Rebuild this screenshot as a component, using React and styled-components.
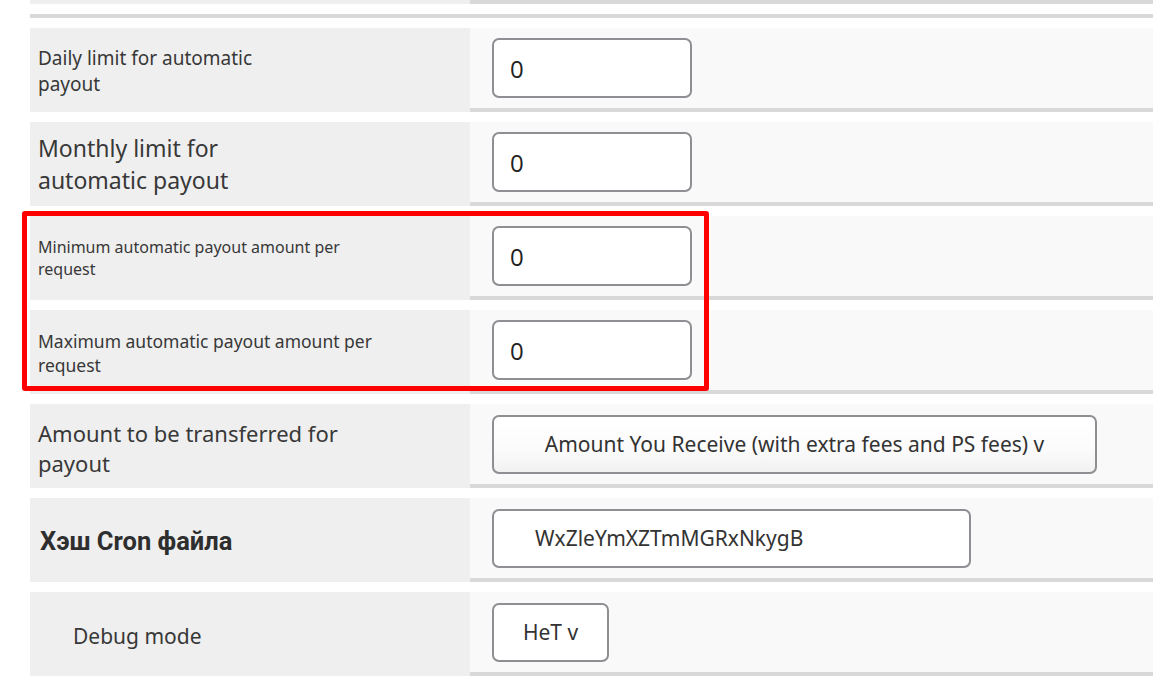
import React from "react";
import styled, { createGlobalStyle } from "styled-components";

const GlobalStyle = createGlobalStyle`
  html, body { margin: 0; padding: 0; background: #ffffff; }
  body { font-family: "Noto Sans", "Open Sans", Arial, sans-serif; color: #333; }
`;

const Page = styled.div`
  position: relative;
  padding-left: 30px;
  width: 1123px;
  overflow: hidden;
`;

const Grid = styled.div`
  display: grid;
  grid-template-columns: 440px 1fr;
`;

const TailRow = styled(Grid)`
  height: 4px;
  & > :first-child { background: #efefef; }
  & > :last-child { background: #d9d9d9; }
`;

const Divider = styled.div`
  height: 4px;
  background: #d9d9d9;
  margin: 10px 0;
`;

const Row = styled(Grid)`
  height: 84px;
  margin-bottom: 10px;
`;

const LabelCell = styled.div`
  background: #efefef;
  display: flex;
  align-items: center;
  padding-left: ${(p) => p.$indent ?? 8}px;
`;

const LabelText = styled.div`
  font-family: ${(p) => (p.$bold ? '"Roboto", "Noto Sans", sans-serif' : '"Noto Sans", "Open Sans", sans-serif')};
  font-weight: ${(p) => (p.$bold ? 700 : 400)};
  font-size: ${(p) => p.$size}px;
  line-height: ${(p) => p.$lh}px;
  color: ${(p) => (p.$bold ? "#2e2e2e" : "#383838")};
  margin-top: ${(p) => p.$shift ?? 0}px;
`;

const ValueCell = styled.div`
  background: #f9f9f9;
  border-bottom: 4px solid #d9d9d9;
  box-sizing: border-box;
  height: 84px;
  display: flex;
  align-items: center;
  padding-left: 22px;
`;

const NumberBox = styled.div`
  box-sizing: border-box;
  width: 200px;
  height: 60px;
  border: 2px solid #8e8e93;
  border-radius: 7px;
  background: #fff;
  display: flex;
  align-items: center;
  padding-left: 16px;
  font-family: "Open Sans", "Noto Sans", sans-serif;
  font-size: 24px;
  color: #222;
`;

const SelectBox = styled.div`
  box-sizing: border-box;
  width: ${(p) => p.$w}px;
  height: 59px;
  border: 2px solid #8e8e93;
  border-radius: 7px;
  background: ${(p) => (p.$shade ? "linear-gradient(#ffffff 0%, #fbfbfb 60%, #f1f1f1 100%)" : "#ffffff")};
  display: flex;
  align-items: center;
  justify-content: ${(p) => (p.$left ? "flex-start" : "center")};
  padding-left: ${(p) => (p.$left ? 41 : 0)}px;
  font-family: "Noto Sans", "Open Sans", sans-serif;
  font-size: 21px;
  color: #333;
  white-space: nowrap;
`;

const Highlight = styled.div`
  position: absolute;
  left: 22px;
  top: 211px;
  width: 687px;
  height: 180px;
  box-sizing: border-box;
  border: 5px solid #ff0000;
  border-radius: 3px;
  pointer-events: none;
`;

const Label = ({ lines, size, lh, bold, indent, shift }) => (
  <LabelCell $indent={indent}>
    <LabelText $size={size} $lh={lh} $bold={bold} $shift={shift}>
      {lines.map((l, i) => (
        <React.Fragment key={i}>
          {i > 0 && <br />}
          {l}
        </React.Fragment>
      ))}
    </LabelText>
  </LabelCell>
);

export default function App() {
  return (
    <>
      <GlobalStyle />
      <Page>
        <TailRow>
          <div />
          <div />
        </TailRow>
        <Divider />
        <Row>
          <Label lines={["Daily limit for automatic", "payout"]} size={19} lh={26} shift={2} />
          <ValueCell>
            <NumberBox>0</NumberBox>
          </ValueCell>
        </Row>
        <Row>
          <Label lines={["Monthly limit for", "automatic payout"]} size={23} lh={32} />
          <ValueCell>
            <NumberBox>0</NumberBox>
          </ValueCell>
        </Row>
        <Row>
          <Label lines={["Minimum automatic payout amount per", "request"]} size={16} lh={22} />
          <ValueCell>
            <NumberBox>0</NumberBox>
          </ValueCell>
        </Row>
        <Row>
          <Label lines={["Maximum automatic payout amount per", "request"]} size={17.5} lh={24} shift={2} />
          <ValueCell>
            <NumberBox>0</NumberBox>
          </ValueCell>
        </Row>
        <Row>
          <Label lines={["Amount to be transferred for", "payout"]} size={22} lh={30} shift={4} />
          <ValueCell>
            <SelectBox $w={605} $shade>
              Amount You Receive (with extra fees and PS fees) v
            </SelectBox>
          </ValueCell>
        </Row>
        <Row>
          <Label lines={["Хэш Cron файла"]} size={25.5} lh={30} bold indent={10} shift={2} />
          <ValueCell>
            <SelectBox $w={479} $left>
              WxZleYmXZTmMGRxNkygB
            </SelectBox>
          </ValueCell>
        </Row>
        <Row>
          <Label lines={["Debug mode"]} size={21} lh={28} indent={43} shift={4} />
          <ValueCell>
            <SelectBox $w={117}>HeT v</SelectBox>
          </ValueCell>
        </Row>
        <Highlight />
      </Page>
    </>
  );
}
